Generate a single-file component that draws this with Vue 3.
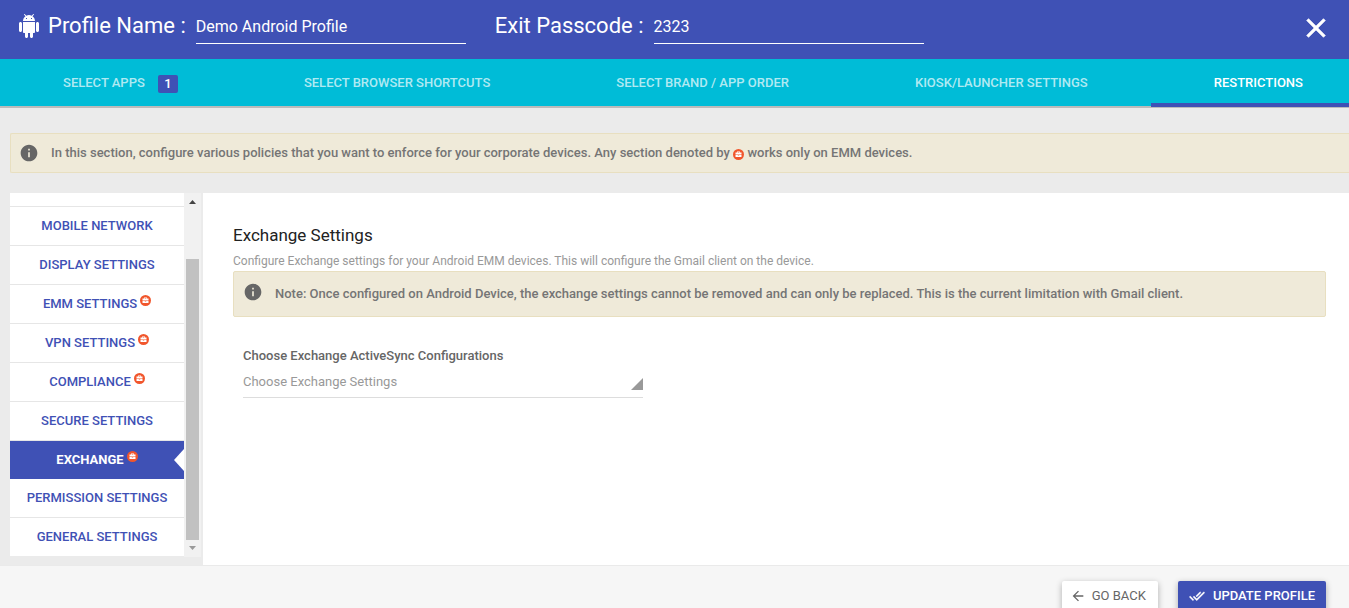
<script setup>
import { ref } from 'vue'

const profileName = ref('Demo Android Profile')
const passcode = ref('2323')
const exchange = ref('')
const activeTab = ref('RESTRICTIONS')
const activeSection = ref('EXCHANGE')

const tabs = [
  { label: 'SELECT APPS', count: 1 },
  { label: 'SELECT BROWSER SHORTCUTS' },
  { label: 'SELECT BRAND / APP ORDER' },
  { label: 'KIOSK/LAUNCHER SETTINGS' },
  { label: 'RESTRICTIONS' },
]

const sections = [
  { label: 'MOBILE NETWORK' },
  { label: 'DISPLAY SETTINGS' },
  { label: 'EMM SETTINGS', emm: true },
  { label: 'VPN SETTINGS', emm: true },
  { label: 'COMPLIANCE', emm: true },
  { label: 'SECURE SETTINGS' },
  { label: 'EXCHANGE', emm: true },
  { label: 'PERMISSION SETTINGS' },
  { label: 'GENERAL SETTINGS' },
]
</script>

<template>
  <div class="page">
    <svg class="defs" aria-hidden="true">
      <symbol id="info" viewBox="0 0 24 24">
        <path d="M12 2C6.48 2 2 6.48 2 12s4.480 10 10 10 10-4.480 10-10S17.520 2 12 2zm1 15h-2v-6h2v6zm0-8h-2V7h2v2z" />
      </symbol>
      <symbol id="emm" viewBox="0 0 11 11">
        <circle cx="5.500" cy="5.500" r="5.500" fill="#f1562c" />
        <path fill="#fff" fill-rule="evenodd" d="M4 2.500h3v1h1.500v2h-6v-2H4zM4.700 3v.5h1.600V3zM2.500 6h2.300v.5h1.400V6h2.300v2h-6z" />
      </symbol>
    </svg>

    <header class="header">
      <svg class="android" viewBox="0 0 24 24" aria-hidden="true">
        <path d="M6 18c0 .55.45 1 1 1h1v3.500c0 .83.67 1.500 1.500 1.500s1.500-.67 1.500-1.500V19h2v3.500c0 .83.67 1.500 1.500 1.500s1.500-.67 1.500-1.500V19h1c.55 0 1-.45 1-1V8H6v10zM3.500 8C2.670 8 2 8.670 2 9.500v7c0 .83.67 1.500 1.500 1.500S5 17.330 5 16.500v-7C5 8.670 4.330 8 3.500 8zm17 0c-.83 0-1.500.67-1.500 1.500v7c0 .83.67 1.500 1.500 1.500s1.500-.67 1.500-1.500v-7c0-.83-.67-1.500-1.500-1.500zm-4.970-5.840l1.300-1.300c.2-.2.2-.51 0-.71-.2-.2-.51-.2-.71 0l-1.480 1.480C13.850 1.230 12.950 1 12 1c-.96 0-1.860.23-2.660.63L7.850.15c-.2-.2-.51-.2-.71 0-.2.2-.2.51 0 .71l1.310 1.310C6.970 3.260 6 5.010 6 7h12c0-1.990-.97-3.750-2.470-4.840zM10 5H9V4h1v1zm5 0h-1V4h1v1z" />
      </svg>
      <label class="title" for="profile-name">Profile Name :</label>
      <input id="profile-name" v-model="profileName" class="field" type="text" />
      <label class="title second" for="passcode">Exit Passcode :</label>
      <input id="passcode" v-model="passcode" class="field" type="text" />
      <button class="close" type="button" aria-label="Close">
        <svg viewBox="0 0 24 24" aria-hidden="true">
          <path d="M19 6.410L17.590 5 12 10.590 6.410 5 5 6.410 10.590 12 5 17.590 6.410 19 12 13.410 17.590 19 19 17.590 13.410 12z" />
        </svg>
      </button>
    </header>

    <nav class="tabs">
      <button
        v-for="tab in tabs"
        :key="tab.label"
        type="button"
        class="tab"
        :class="{ active: tab.label === activeTab }"
        @click="activeTab = tab.label"
      >
        <span>{{ tab.label }}</span>
        <span v-if="tab.count" class="count">{{ tab.count }}</span>
      </button>
    </nav>

    <div class="notice banner">
      <svg class="info" aria-hidden="true"><use href="#info" /></svg>
      <p>
        In this section, configure various policies that you want to enforce for your corporate devices. Any section denoted by
        <svg class="emm inline" aria-hidden="true"><use href="#emm" /></svg>
        works only on EMM devices.
      </p>
    </div>

    <main class="body">
      <aside class="sidebar">
        <ul class="sections">
          <li class="cut"></li>
          <li v-for="s in sections" :key="s.label">
            <button
              type="button"
              class="section"
              :class="{ active: s.label === activeSection }"
              @click="activeSection = s.label"
            >
              <span>{{ s.label }}</span>
              <svg v-if="s.emm" class="emm" aria-hidden="true"><use href="#emm" /></svg>
            </button>
          </li>
        </ul>
        <div class="scrollbar" aria-hidden="true">
          <svg class="arrow" viewBox="0 0 17 17"><path fill="#444" d="M5 11h7L8.500 7z" /></svg>
          <div class="track"><div class="thumb"></div></div>
          <svg class="arrow" viewBox="0 0 17 17"><path fill="#999" d="M5 6h7L8.500 10z" /></svg>
        </div>
      </aside>

      <section class="panel">
        <h1>Exchange Settings</h1>
        <p class="lead">Configure Exchange settings for your Android EMM devices. This will configure the Gmail client on the device.</p>
        <div class="notice note">
          <svg class="info" aria-hidden="true"><use href="#info" /></svg>
          <p>Note: Once configured on Android Device, the exchange settings cannot be removed and can only be replaced. This is the current limitation with Gmail client.</p>
        </div>
        <div class="choice">
          <label for="exchange">Choose Exchange ActiveSync Configurations</label>
          <select id="exchange" v-model="exchange">
            <option value="">Choose Exchange Settings</option>
          </select>
        </div>
      </section>
    </main>

    <footer class="footer">
      <button class="action" type="button">
        <svg viewBox="0 0 24 24" aria-hidden="true"><path d="M20 11H7.830l5.590-5.590L12 4l-8 8 8 8 1.410-1.410L7.830 13H20v-2z" /></svg>
        GO BACK
      </button>
      <button class="action primary" type="button">
        <svg viewBox="0 0 24 24" aria-hidden="true"><path d="M18 7l-1.410-1.410-6.340 6.340 1.410 1.410L18 7zm4.240-1.410L11.660 16.170 7.480 12l-1.410 1.410L11.660 19l12-12-1.420-1.410zM.41 13.410L6 19l1.410-1.410L1.830 12 .41 13.410z" /></svg>
        UPDATE PROFILE
      </button>
    </footer>
  </div>
</template>

<style>
body {
  overflow: hidden;
  background: #f6f6f6;
}
</style>

<style scoped>
.page {
  font-family: Roboto, "Liberation Sans", sans-serif;
  font-size: 13px;
  line-height: 20px;
  color: #666;
  height: 100vh;
  overflow: hidden;
  background: #ebebeb;
  display: flex;
  flex-direction: column;
}
.page * {
  box-sizing: border-box;
}
.page > * {
  flex-shrink: 0;
}
button,
input,
select {
  font: inherit;
  border: 0;
  border-radius: 0;
  background: none;
  padding: 0;
  margin: 0;
  color: inherit;
  outline: 0;
}
button {
  cursor: pointer;
}
svg {
  fill: currentColor;
  flex: none;
}
p,
h1,
ul {
  margin: 0;
  padding: 0;
  list-style: none;
}
.defs {
  position: absolute;
  width: 0;
  height: 0;
}
.header {
  height: 59px;
  background: #3f51b5;
  color: #fff;
  display: flex;
  align-items: center;
  padding: 0 17px;
}
.android {
  width: 24px;
  height: 24px;
  margin-bottom: 8px;
}
.title {
  font-size: 22px;
  line-height: 32px;
  margin: 0 10px 8px 7px;
  white-space: nowrap;
}
.second {
  margin-left: 29px;
}
.field {
  width: 270px;
  height: 34px;
  font-size: 16px;
  border-bottom: 1px solid #fff;
  margin-bottom: 6px;
}
.close {
  margin: 0 0 4px auto;
}
.close svg {
  display: block;
  width: 32px;
  height: 32px;
  stroke: currentColor;
  stroke-width: 0.5;
}
.tabs {
  height: 49px;
  margin-right: -17px;
  background: #00bcd7;
  border-bottom: 2px solid #bbb;
  display: flex;
}
.tab {
  flex: 1 1 auto;
  height: 48px;
  display: flex;
  align-items: center;
  justify-content: center;
  gap: 13px;
  font-weight: 500;
  color: rgba(255, 255, 255, 0.7);
  white-space: nowrap;
  border-bottom: 4px solid transparent;
  padding-top: 4px;
}
.tab.active {
  color: #fff;
  border-bottom-color: #3f51b5;
}
.count {
  width: 20px;
  height: 18px;
  line-height: 18px;
  border-radius: 2px;
  background: #3f51b5;
  color: #fff;
  margin-top: 2px;
}
.notice {
  display: flex;
  align-items: center;
  gap: 12px;
  background: #efead9;
  border: 1px solid #e8dfc0;
  border-radius: 2px;
  color: #757575;
  font-weight: 500;
  white-space: nowrap;
}
.banner {
  height: 40px;
  margin: 25px 0 20px 10px;
  padding-left: 8px;
  border-right: 0;
  border-radius: 2px 0 0 2px;
}
.info {
  width: 20px;
  height: 20px;
  color: #666;
}
.emm {
  width: 11px;
  height: 11px;
}
.inline {
  vertical-align: -3px;
}
.body {
  display: flex;
  height: 372px;
}
.sidebar {
  width: 203px;
  padding: 0 2px 8px 10px;
  display: flex;
}
.sections {
  flex: 1;
  align-self: flex-start;
  background: #fff;
}
.cut {
  height: 14px;
  border-bottom: 1px solid #e6e6e6;
}
.section {
  width: 100%;
  height: 39px;
  display: flex;
  align-items: center;
  justify-content: center;
  gap: 3px;
  color: #3f51b5;
  font-weight: 500;
  border-bottom: 1px solid #e6e6e6;
}
.section .emm {
  margin-bottom: 7px;
}
.section.active {
  height: 38px;
  border: 0;
  background: #3f51b5;
  color: #fff;
  font-weight: 700;
  position: relative;
}
.section.active::after {
  content: "";
  position: absolute;
  right: 0;
  top: 8px;
  border: 11px solid transparent;
  border-right: 10px solid #fff;
  border-left: 0;
}
.sections li:last-child .section {
  height: 38px;
  border-bottom: 0;
}
.scrollbar {
  width: 17px;
  background: #f1f1f1;
  display: flex;
  flex-direction: column;
}
.arrow {
  width: 17px;
  height: 17px;
}
.track {
  flex: 1;
  padding: 49px 2px 0;
}
.thumb {
  height: 100%;
  background: #c1c1c1;
}
.panel {
  flex: 1;
  min-width: 0;
  background: #fff;
  padding: 30px 23px 0 30px;
}
h1 {
  font-size: 17px;
  line-height: 24px;
  font-weight: 400;
  color: #222;
}
.lead {
  font-size: 12px;
  line-height: 20px;
  padding-top: 4px;
  color: #999;
}
.note {
  height: 46px;
  padding-left: 9px;
}
.note .info {
  margin-bottom: 4px;
}
.choice {
  width: 400px;
  margin: 29px 0 0 10px;
  display: flex;
  flex-direction: column;
  position: relative;
}
.choice label {
  font-weight: 500;
}
.choice select {
  height: 32px;
  appearance: none;
  color: #999;
  border-bottom: 1px solid #ddd;
}
.choice::after {
  content: "";
  position: absolute;
  right: 0;
  bottom: 8px;
  width: 12px;
  height: 12px;
  background: #999;
  clip-path: polygon(100% 0, 100% 100%, 0 100%);
  pointer-events: none;
}
.footer {
  flex: 1;
  min-height: 43px;
  background: #f6f6f6;
  border-top: 1px solid #eaeaea;
  padding: 15px 23px 0 0;
  display: flex;
  justify-content: flex-end;
  align-items: flex-start;
  gap: 20px;
}
.action {
  height: 30px;
  padding: 0 12px 0 8px;
  display: flex;
  align-items: center;
  gap: 6px;
  background: #fff;
  border-radius: 2px;
  box-shadow: 0 2px 6px rgba(0, 0, 0, 0.3);
  white-space: nowrap;
}
.action svg {
  width: 16px;
  height: 16px;
}
.primary {
  background: #3f51b5;
  color: #fff;
  font-weight: 500;
  gap: 8px;
  padding: 0 11px;
}
.primary svg {
  stroke: currentColor;
  stroke-width: 0.5;
}
</style>
